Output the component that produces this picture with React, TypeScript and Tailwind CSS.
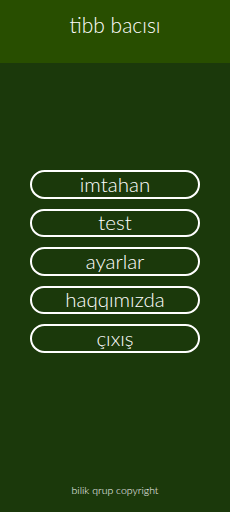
import React from "react";

const items = ["imtahan", "test", "ayarlar", "haqqımızda", "çıxış"];

export default function App() {
  return (
    <div
      className="w-[230px] h-[512px] flex flex-col bg-[#1b390b] text-white"
      style={{ fontFamily: "Lato, 'Noto Sans', sans-serif" }}
    >
      <div className="h-[63px] bg-[#284e00] flex items-center justify-center">
        <span className="text-[21px] font-light mt-[-14px]">tibb bacısı</span>
      </div>
      <div className="flex-1 flex flex-col items-center pt-[107px] gap-[10px]">
        {items.map((t) => (
          <button
            key={t}
            className="w-[170px] h-[28.5px] rounded-full border-2 border-white flex items-center justify-center text-[20.5px] leading-none font-light pb-[1px]"
          >
            {t}
          </button>
        ))}
      </div>
      <div className="flex justify-center pb-[16px]">
        <span className="text-[10.5px] leading-[12px] font-light">bilik qrup copyright</span>
      </div>
    </div>
  );
}
